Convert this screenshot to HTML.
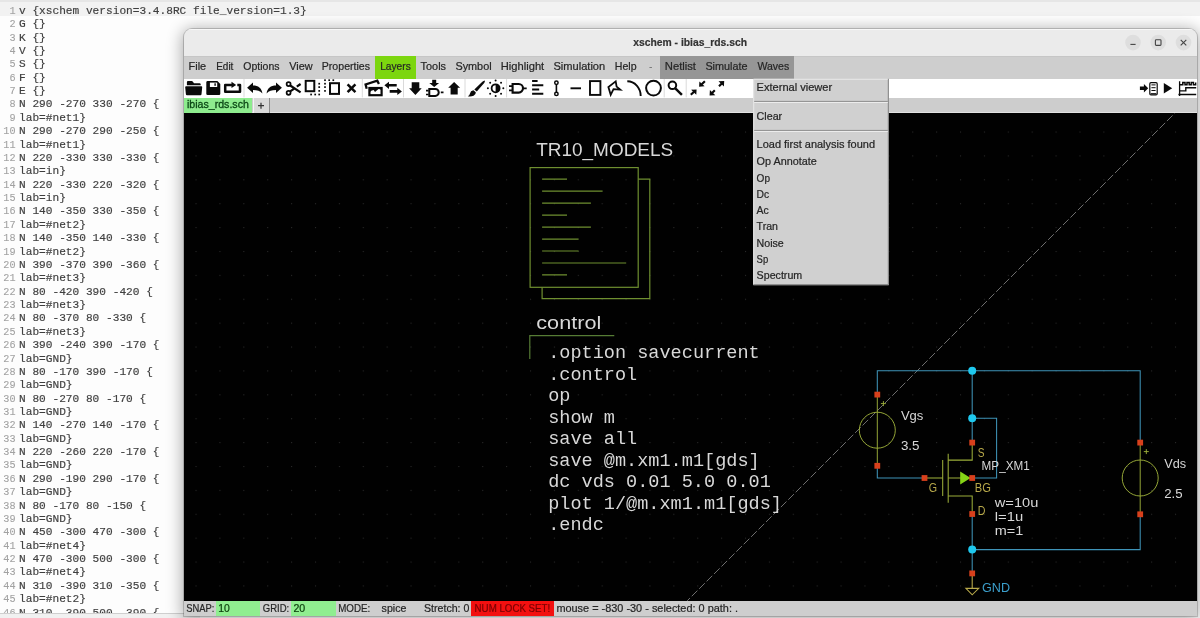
<!DOCTYPE html>
<html><head><meta charset="utf-8"><title>xschem - ibias_rds.sch</title>
<style>
html,body{margin:0;padding:0}
body{width:1200px;height:618px;overflow:hidden;position:relative;background:#fdfdfd;font-family:"Liberation Sans",sans-serif}
.ed{position:absolute;left:0;top:0;width:420px;height:612.5px;overflow:hidden;background:#fdfdfd;border-top:2px solid #e6e6e6;box-sizing:border-box}
.edbot{position:absolute;left:0;top:612.5px;width:200px;height:6px;background:#f1f1f1;border-top:1px solid #cfcfcf;box-sizing:border-box}
.edcur{position:absolute;left:0;top:0;width:1200px;height:13.6px;background:#f2f2f2}
.el{position:absolute;left:0;height:13.4px;line-height:13.4px;white-space:pre;font-family:"Liberation Mono",monospace;font-size:10.2px;color:#3f3f3f;-webkit-text-stroke:0.16px #3f3f3f}
.ln{position:absolute;right:-15.5px;top:0;color:#a2a2a2;-webkit-text-stroke:0.1px #a2a2a2;transform:scaleX(1.0);transform-origin:100% 50%}
.lt{position:absolute;left:19.4px;top:0;transform:scaleX(1.0946);transform-origin:0 50%}
.topstrip{position:absolute;left:0;top:0;width:1200px;height:15.6px;background:#f2f2f2;border-top:2px solid #e6e6e6;box-sizing:border-box}
.win{position:absolute;left:184px;top:29px;width:1013.4px;height:587px;background:#cdcdcd;border-radius:8px 8px 0 0;box-shadow:0 2px 16px 2px rgba(0,0,0,.33),0 0 0 1px rgba(0,0,0,.18);overflow:hidden}
.title{position:absolute;left:0;top:0;width:100%;height:26.6px;background:#ebebeb;border-top:1px solid #f8f8f8;box-sizing:border-box}
.menub{position:absolute;left:0;top:26.6px;width:100%;height:23.2px;background:#cecece;border-top:1px solid #c6c6c6;box-sizing:border-box}
.mlay{position:absolute;left:191.2px;top:26.6px;width:40.6px;height:23.2px;background:#7cd60f}
.mdark{position:absolute;left:476.2px;top:26.6px;width:133.8px;height:23.2px;background:#969696}
.tool{position:absolute;left:0;top:49.8px;width:100%;height:18.8px;background:#fff}
.tabs{position:absolute;left:0;top:68.6px;width:100%;height:15.8px;background:#cdcdcd;border-bottom:1px solid #e2e2e2;box-sizing:border-box}
.tab1{position:absolute;left:0;top:68.6px;width:68.4px;height:15.4px;background:#8eec8e}
.tab2{position:absolute;left:68.6px;top:68.8px;width:17.4px;height:15.2px;background:#d9d9d9;border-left:1px solid #f4f4f4;border-right:1px solid #8c8c8c;box-sizing:border-box}
.canvas{position:absolute;left:0;top:84.4px;width:100%;height:487.4px;background:#000}
.status{position:absolute;left:0;top:571.8px;width:100%;height:14.8px;background:#cecece}
.sg1{position:absolute;left:32.4px;top:572.4px;width:44px;height:14.2px;background:#90ee90}
.sg2{position:absolute;left:107.4px;top:572.4px;width:44.6px;height:14.2px;background:#90ee90}
.sred{position:absolute;left:287.2px;top:572.2px;width:83.2px;height:14.4px;background:#f31010}
.drop{position:absolute;left:569.2px;top:50.6px;width:135.4px;height:206.6px;background:#cfcfcf;border-right:1px solid #8a8a8a;border-bottom:1px solid #8a8a8a;border-left:1px solid #e6e6e6;box-sizing:border-box}
.sep{position:absolute;left:1px;width:133px;height:0;border-top:1px solid #9a9a9a;border-bottom:1px solid #ececec}
.root{position:absolute;left:0;top:0;width:1200px;height:618px;overflow:hidden;will-change:transform;opacity:.9999}
svg.ov{position:absolute;left:0;top:0;width:1200px;height:618px;pointer-events:none}
svg text{font-family:"Liberation Sans",sans-serif;white-space:pre}
</style></head>
<body>
<div class="root">
<div class="topstrip"></div>
<div class="ed">
<div class="edcur"></div>
<div class="el" style="top:2.90px"><span class="ln">1</span><span class="lt">v {xschem version=3.4.8RC file_version=1.3}</span></div>
<div class="el" style="top:16.27px"><span class="ln">2</span><span class="lt">G {}</span></div>
<div class="el" style="top:29.64px"><span class="ln">3</span><span class="lt">K {}</span></div>
<div class="el" style="top:43.01px"><span class="ln">4</span><span class="lt">V {}</span></div>
<div class="el" style="top:56.38px"><span class="ln">5</span><span class="lt">S {}</span></div>
<div class="el" style="top:69.75px"><span class="ln">6</span><span class="lt">F {}</span></div>
<div class="el" style="top:83.12px"><span class="ln">7</span><span class="lt">E {}</span></div>
<div class="el" style="top:96.49px"><span class="ln">8</span><span class="lt">N 290 -270 330 -270 {</span></div>
<div class="el" style="top:109.86px"><span class="ln">9</span><span class="lt">lab=#net1}</span></div>
<div class="el" style="top:123.23px"><span class="ln">10</span><span class="lt">N 290 -270 290 -250 {</span></div>
<div class="el" style="top:136.60px"><span class="ln">11</span><span class="lt">lab=#net1}</span></div>
<div class="el" style="top:149.97px"><span class="ln">12</span><span class="lt">N 220 -330 330 -330 {</span></div>
<div class="el" style="top:163.34px"><span class="ln">13</span><span class="lt">lab=in}</span></div>
<div class="el" style="top:176.71px"><span class="ln">14</span><span class="lt">N 220 -330 220 -320 {</span></div>
<div class="el" style="top:190.08px"><span class="ln">15</span><span class="lt">lab=in}</span></div>
<div class="el" style="top:203.45px"><span class="ln">16</span><span class="lt">N 140 -350 330 -350 {</span></div>
<div class="el" style="top:216.82px"><span class="ln">17</span><span class="lt">lab=#net2}</span></div>
<div class="el" style="top:230.19px"><span class="ln">18</span><span class="lt">N 140 -350 140 -330 {</span></div>
<div class="el" style="top:243.56px"><span class="ln">19</span><span class="lt">lab=#net2}</span></div>
<div class="el" style="top:256.93px"><span class="ln">20</span><span class="lt">N 390 -370 390 -360 {</span></div>
<div class="el" style="top:270.30px"><span class="ln">21</span><span class="lt">lab=#net3}</span></div>
<div class="el" style="top:283.67px"><span class="ln">22</span><span class="lt">N 80 -420 390 -420 {</span></div>
<div class="el" style="top:297.04px"><span class="ln">23</span><span class="lt">lab=#net3}</span></div>
<div class="el" style="top:310.41px"><span class="ln">24</span><span class="lt">N 80 -370 80 -330 {</span></div>
<div class="el" style="top:323.78px"><span class="ln">25</span><span class="lt">lab=#net3}</span></div>
<div class="el" style="top:337.15px"><span class="ln">26</span><span class="lt">N 390 -240 390 -170 {</span></div>
<div class="el" style="top:350.52px"><span class="ln">27</span><span class="lt">lab=GND}</span></div>
<div class="el" style="top:363.89px"><span class="ln">28</span><span class="lt">N 80 -170 390 -170 {</span></div>
<div class="el" style="top:377.26px"><span class="ln">29</span><span class="lt">lab=GND}</span></div>
<div class="el" style="top:390.63px"><span class="ln">30</span><span class="lt">N 80 -270 80 -170 {</span></div>
<div class="el" style="top:404.00px"><span class="ln">31</span><span class="lt">lab=GND}</span></div>
<div class="el" style="top:417.37px"><span class="ln">32</span><span class="lt">N 140 -270 140 -170 {</span></div>
<div class="el" style="top:430.74px"><span class="ln">33</span><span class="lt">lab=GND}</span></div>
<div class="el" style="top:444.11px"><span class="ln">34</span><span class="lt">N 220 -260 220 -170 {</span></div>
<div class="el" style="top:457.48px"><span class="ln">35</span><span class="lt">lab=GND}</span></div>
<div class="el" style="top:470.85px"><span class="ln">36</span><span class="lt">N 290 -190 290 -170 {</span></div>
<div class="el" style="top:484.22px"><span class="ln">37</span><span class="lt">lab=GND}</span></div>
<div class="el" style="top:497.59px"><span class="ln">38</span><span class="lt">N 80 -170 80 -150 {</span></div>
<div class="el" style="top:510.96px"><span class="ln">39</span><span class="lt">lab=GND}</span></div>
<div class="el" style="top:524.33px"><span class="ln">40</span><span class="lt">N 450 -300 470 -300 {</span></div>
<div class="el" style="top:537.70px"><span class="ln">41</span><span class="lt">lab=#net4}</span></div>
<div class="el" style="top:551.07px"><span class="ln">42</span><span class="lt">N 470 -300 500 -300 {</span></div>
<div class="el" style="top:564.44px"><span class="ln">43</span><span class="lt">lab=#net4}</span></div>
<div class="el" style="top:577.81px"><span class="ln">44</span><span class="lt">N 310 -390 310 -350 {</span></div>
<div class="el" style="top:591.18px"><span class="ln">45</span><span class="lt">lab=#net2}</span></div>
<div class="el" style="top:604.55px"><span class="ln">46</span><span class="lt">N 310 -390 500 -390 {</span></div>
</div>
<div class="edbot"></div>
<div class="win">
 <div class="title"></div>
 <div class="menub"></div><div class="mlay"></div><div class="mdark"></div>
 <div class="tool"></div>
 <div class="tabs"></div><div class="tab1"></div><div class="tab2"></div>
 <div class="canvas"></div>
 <div class="status"></div><div class="sg1"></div><div class="sg2"></div><div class="sred"></div>
 
</div>
<svg class="ov" viewBox="0 0 1200 618">
<defs>
<pattern id="grid" x="195.5" y="131.5" width="23.89" height="23.89" patternUnits="userSpaceOnUse"><rect x="0" y="0" width="1.1" height="1.1" fill="#2a2a2a"/></pattern>
<clipPath id="cv"><rect x="184" y="113.4" width="1013.4" height="487.4"/></clipPath>
</defs>
<g clip-path="url(#cv)">
<rect x="184" y="113" width="1013.4" height="487.8" fill="url(#grid)"/>
<path d="M1180 108L683 605" stroke="#8c8c8c" stroke-width="0.8" stroke-dasharray="8 2.5" fill="none"/>
<text x="536.2" y="156.2" font-size="18.85" fill="#d8d8d8" textLength="137.0" lengthAdjust="spacingAndGlyphs">TR10_MODELS</text>
<g fill="none" stroke="#6f8f30" stroke-width="1.2">
<rect x="530.1" y="167.6" width="108.1" height="119.7"/>
<path d="M638.2 179.2H649.8V298.6H542.1V287.3"/>
<path d="M542.1 179.20H567"/>
<path d="M542.1 191.17H602.6"/>
<path d="M542.1 203.14H590.9"/>
<path d="M542.1 215.11H567"/>
<path d="M542.1 227.08H590.9"/>
<path d="M542.1 239.05H578.6"/>
<path d="M542.1 251.02H578.6"/>
<path d="M542.1 262.99H626.2"/>
<path d="M542.1 274.96H567"/>
</g>
<text x="536.3" y="328.7" font-size="18.85" fill="#d8d8d8" textLength="65.0" lengthAdjust="spacingAndGlyphs">control</text>
<path d="M614.3 335.6H529.8V358.9" fill="none" stroke="#567c35" stroke-width="1.2"/>
<text x="548.2" y="358.0" font-size="18.5" fill="#d8d8d8" style="font-family:&quot;Liberation Mono&quot;,monospace" textLength="211.47" lengthAdjust="spacingAndGlyphs">.option savecurrent</text>
<text x="548.2" y="379.55" font-size="18.5" fill="#d8d8d8" style="font-family:&quot;Liberation Mono&quot;,monospace" textLength="89.04" lengthAdjust="spacingAndGlyphs">.control</text>
<text x="548.2" y="401.1" font-size="18.5" fill="#d8d8d8" style="font-family:&quot;Liberation Mono&quot;,monospace" textLength="22.26" lengthAdjust="spacingAndGlyphs">op</text>
<text x="548.2" y="422.65" font-size="18.5" fill="#d8d8d8" style="font-family:&quot;Liberation Mono&quot;,monospace" textLength="66.78" lengthAdjust="spacingAndGlyphs">show m</text>
<text x="548.2" y="444.2" font-size="18.5" fill="#d8d8d8" style="font-family:&quot;Liberation Mono&quot;,monospace" textLength="89.04" lengthAdjust="spacingAndGlyphs">save all</text>
<text x="548.2" y="465.75" font-size="18.5" fill="#d8d8d8" style="font-family:&quot;Liberation Mono&quot;,monospace" textLength="211.47" lengthAdjust="spacingAndGlyphs">save @m.xm1.m1[gds]</text>
<text x="548.2" y="487.3" font-size="18.5" fill="#d8d8d8" style="font-family:&quot;Liberation Mono&quot;,monospace" textLength="222.6" lengthAdjust="spacingAndGlyphs">dc vds 0.01 5.0 0.01</text>
<text x="548.2" y="508.85" font-size="18.5" fill="#d8d8d8" style="font-family:&quot;Liberation Mono&quot;,monospace" textLength="233.73" lengthAdjust="spacingAndGlyphs">plot 1/@m.xm1.m1[gds]</text>
<text x="548.2" y="530.4" font-size="18.5" fill="#d8d8d8" style="font-family:&quot;Liberation Mono&quot;,monospace" textLength="55.65" lengthAdjust="spacingAndGlyphs">.endc</text>
<g fill="none" stroke="#3f94b8" stroke-width="1.05">
<path d="M877.3 394.6V370.7H1140.2V442.6"/>
<path d="M877.3 465.8V478.0H924.5"/>
<path d="M972.2 370.7V442.6"/>
<path d="M972.2 418.2H996.6V478.0H972.2"/>
<path d="M972.2 514V573.4"/>
<path d="M972.2 549.6H1140.2V514.3"/>
</g>
<g fill="none" stroke="#9cae3a" stroke-width="0.95"><circle cx="877.3" cy="430.2" r="18"/><path d="M877.3 394.6V465.8"/><path d="M880.9 403.6h5M883.4 401.1v5"/></g>
<g fill="none" stroke="#9cae3a" stroke-width="0.95"><circle cx="1140.2" cy="478.0" r="18"/><path d="M1140.2 442.6V514.3"/><path d="M1143.8 451.6h5M1146.3 449.1v5"/></g>
<g fill="none" stroke="#9cae3a" stroke-width="1.05">
<path d="M972.2 442.6V460.1H948.2"/>
<path d="M948.2 453.7V502.8"/>
<path d="M942.7 460.1V496"/>
<path d="M924.5 478.0H942.7"/>
<path d="M948.2 478.0H972.2"/>
<path d="M948.2 496H972.2V514"/>
</g>
<path d="M960.2 471.6L970.6 478L960.2 484.6Z" fill="#86d416"/>
<path d="M972.2 573.4V588.4M965.9 588.4H978.7L972.2 594.8Z" fill="none" stroke="#b8a94a" stroke-width="1.1"/>
<circle cx="972.2" cy="370.7" r="4" fill="#1ec8ee"/>
<circle cx="972.2" cy="418.2" r="4" fill="#1ec8ee"/>
<circle cx="972.2" cy="549.6" r="4" fill="#1ec8ee"/>
<rect x="874.4" y="391.7" width="5.8" height="5.8" fill="#d8401c"/>
<rect x="874.4" y="462.9" width="5.8" height="5.8" fill="#d8401c"/>
<rect x="1137.3" y="439.7" width="5.8" height="5.8" fill="#d8401c"/>
<rect x="1137.3" y="511.4" width="5.8" height="5.8" fill="#d8401c"/>
<rect x="969.3" y="439.7" width="5.8" height="5.8" fill="#d8401c"/>
<rect x="921.6" y="475.1" width="5.8" height="5.8" fill="#d8401c"/>
<rect x="969.3" y="475.1" width="5.8" height="5.8" fill="#d8401c"/>
<rect x="969.3" y="511.1" width="5.8" height="5.8" fill="#d8401c"/>
<rect x="969.3" y="570.5" width="5.8" height="5.8" fill="#d8401c"/>
<text x="900.9" y="419.8" font-size="12.0" fill="#d8d8d8" textLength="22.5" lengthAdjust="spacingAndGlyphs">Vgs</text>
<text x="900.9" y="449.7" font-size="12.0" fill="#d8d8d8" textLength="18.6" lengthAdjust="spacingAndGlyphs">3.5</text>
<text x="977.8" y="456.5" font-size="12.0" fill="#b8a94a" textLength="6.8" lengthAdjust="spacingAndGlyphs">S</text>
<text x="981.6" y="469.8" font-size="12.0" fill="#d8d8d8" textLength="48.1" lengthAdjust="spacingAndGlyphs">MP_XM1</text>
<text x="928.7" y="492.1" font-size="12.0" fill="#b8a94a" textLength="8.3" lengthAdjust="spacingAndGlyphs">G</text>
<text x="974.8" y="492.1" font-size="12.0" fill="#b8a94a" textLength="16.1" lengthAdjust="spacingAndGlyphs">BG</text>
<text x="977.7" y="515.0" font-size="12.0" fill="#b8a94a" textLength="7.7" lengthAdjust="spacingAndGlyphs">D</text>
<text x="994.8" y="506.7" font-size="12.0" fill="#d8d8d8" textLength="43.5" lengthAdjust="spacingAndGlyphs">w=10u</text>
<text x="994.8" y="520.9" font-size="12.0" fill="#d8d8d8" textLength="28.5" lengthAdjust="spacingAndGlyphs">l=1u</text>
<text x="994.8" y="534.9" font-size="12.0" fill="#d8d8d8" textLength="28.5" lengthAdjust="spacingAndGlyphs">m=1</text>
<text x="1164.2" y="467.7" font-size="12.0" fill="#d8d8d8" textLength="21.9" lengthAdjust="spacingAndGlyphs">Vds</text>
<text x="1164.2" y="497.8" font-size="12.0" fill="#d8d8d8" textLength="18.4" lengthAdjust="spacingAndGlyphs">2.5</text>
<text x="982.0" y="591.5" font-size="12.0" fill="#3b9fcc" textLength="28.0" lengthAdjust="spacingAndGlyphs">GND</text>
</g>
<!-- dropdown -->
<rect x="753.2" y="78.8" width="135.6" height="206.4" fill="#d0d0d0"/>
<path d="M888.3 78.8V284.7H753.7" fill="none" stroke="#808080" stroke-width="1"/>
<path d="M753.7 284.2V79.3H887.8" fill="none" stroke="#e8e8e8" stroke-width="1"/>
<path d="M754.2 101.4H887.8M754.2 130.4H887.8" stroke="#8e8e8e" stroke-width="1"/>
<path d="M754.2 102.5H887.8M754.2 131.5H887.8" stroke="#ececec" stroke-width="1"/>
<!-- title -->
<text x="633.2" y="46.4" font-size="11" fill="#333333" font-weight="bold" textLength="113.8" lengthAdjust="spacingAndGlyphs" stroke="#333333" stroke-width="0.2">xschem - ibias_rds.sch</text>
<g fill="#dedede"><circle cx="1133" cy="42.6" r="7.8"/><circle cx="1158.2" cy="42.6" r="7.8"/><circle cx="1183.5" cy="42.6" r="7.8"/></g>
<g stroke="#444" stroke-width="1.1" fill="none"><path d="M1130.4 44.4h5.2"/><rect x="1155.4" y="39.8" width="5.6" height="5.6" rx="0.8"/><path d="M1180.7 39.8l5.6 5.6M1186.3 39.8l-5.6 5.6"/></g>
<text x="188.6" y="70.35" font-size="10.8" fill="#262626" textLength="17.6" lengthAdjust="spacingAndGlyphs" stroke="#262626" stroke-width="0.22">File</text>
<text x="216.2" y="70.35" font-size="10.8" fill="#262626" textLength="17.2" lengthAdjust="spacingAndGlyphs" stroke="#262626" stroke-width="0.22">Edit</text>
<text x="243.3" y="70.35" font-size="10.8" fill="#262626" textLength="36.2" lengthAdjust="spacingAndGlyphs" stroke="#262626" stroke-width="0.22">Options</text>
<text x="289.2" y="70.35" font-size="10.8" fill="#262626" textLength="23.4" lengthAdjust="spacingAndGlyphs" stroke="#262626" stroke-width="0.22">View</text>
<text x="321.8" y="70.35" font-size="10.8" fill="#262626" textLength="48.2" lengthAdjust="spacingAndGlyphs" stroke="#262626" stroke-width="0.22">Properties</text>
<text x="380.2" y="70.35" font-size="10.8" fill="#262626" textLength="30.6" lengthAdjust="spacingAndGlyphs" stroke="#262626" stroke-width="0.22">Layers</text>
<text x="420.6" y="70.35" font-size="10.8" fill="#262626" textLength="25.4" lengthAdjust="spacingAndGlyphs" stroke="#262626" stroke-width="0.22">Tools</text>
<text x="455.4" y="70.35" font-size="10.8" fill="#262626" textLength="36.2" lengthAdjust="spacingAndGlyphs" stroke="#262626" stroke-width="0.22">Symbol</text>
<text x="500.8" y="70.35" font-size="10.8" fill="#262626" textLength="43.4" lengthAdjust="spacingAndGlyphs" stroke="#262626" stroke-width="0.22">Highlight</text>
<text x="553.4" y="70.35" font-size="10.8" fill="#262626" textLength="51.8" lengthAdjust="spacingAndGlyphs" stroke="#262626" stroke-width="0.22">Simulation</text>
<text x="614.8" y="70.35" font-size="10.8" fill="#262626" textLength="21.8" lengthAdjust="spacingAndGlyphs" stroke="#262626" stroke-width="0.22">Help</text>
<text x="664.8" y="70.35" font-size="10.8" fill="#262626" textLength="31.2" lengthAdjust="spacingAndGlyphs" stroke="#262626" stroke-width="0.22">Netlist</text>
<text x="705.4" y="70.35" font-size="10.8" fill="#262626" textLength="42.2" lengthAdjust="spacingAndGlyphs" stroke="#262626" stroke-width="0.22">Simulate</text>
<text x="757.4" y="70.35" font-size="10.8" fill="#262626" textLength="31.8" lengthAdjust="spacingAndGlyphs" stroke="#262626" stroke-width="0.22">Waves</text>
<text x="649.2" y="70.35" font-size="10.8" fill="#777" textLength="3" lengthAdjust="spacingAndGlyphs" stroke="#777" stroke-width="0.22">-</text>
<path d="M244 79V97.4" stroke="#dadada" stroke-width="1"/>
<path d="M362.3 79V97.4" stroke="#dadada" stroke-width="1"/>
<path d="M403.5 79V97.4" stroke="#dadada" stroke-width="1"/>
<path d="M465 79V97.4" stroke="#dadada" stroke-width="1"/>
<path d="M506.6 79V97.4" stroke="#dadada" stroke-width="1"/>
<path d="M664.2 79V97.4" stroke="#dadada" stroke-width="1"/>
<path d="M686.2 79V97.4" stroke="#dadada" stroke-width="1"/>
<path fill="#0a0a0a" d="M186.9 82.2q0-1.1 1.1-1.1h3.7q.6 0 1 .5l1.3 1.6h5.6q1.1 0 1.1 1.1v1H186.9z"/>
<path fill="#0a0a0a" d="M186.1 86.3h15.2q1 0 .9 1l-.7 6.9q-.1 1-1.1 1h-13.4q-1 0-1.1-1l-.7-6.9q-.1-1 .9-1z"/>
<path fill="#0a0a0a" d="M207.6 81.1h9.8l2.9 2.8v9.8q0 1.3-1.3 1.3h-11.4q-1.3 0-1.3-1.3v-11.3q0-1.3 1.3-1.3z"/>
<rect x="209.9" y="82.6" width="7.3" height="4.4" fill="#fff"/>
<rect x="214.4" y="83.3" width="1.4" height="2.5" fill="#0a0a0a"/>
<path fill="none" stroke="#0a0a0a" stroke-width="2.5" d="M232 85.1h-6.8v6.7h14.8v-6.7h-2.7" stroke-linejoin="round"/>
<path fill="#0a0a0a" d="M231.5 81.8l4.7 3.1l-4.7 3.1z"/>
<path fill="#0a0a0a" d="M247.1 87.7l5.9-5.2v3c5.2 0 8.7 2.6 9.4 7.9c-2.4-2.6-5-3.4-9.4-3.4v3z"/>
<path fill="#0a0a0a" d="M281.9 87.7l-5.9-5.2v3c-5.2 0-8.7 2.6-9.4 7.9c2.4-2.6 5-3.4 9.4-3.4v3z"/>
<g fill="none" stroke="#0a0a0a"><circle cx="288.6" cy="84.1" r="2" stroke-width="1.7"/><circle cx="288.6" cy="92.8" r="2" stroke-width="1.7"/><path stroke-width="2.2" d="M290.2 85.5L300.6 92.4M290.2 91.4L295 88.2M296.8 86.7L300.6 84"/></g>
<rect x="305.7" y="80.8" width="8.6" height="10.4" fill="none" stroke="#0a0a0a" stroke-width="2"/>
<rect x="318.35" y="82.85" width="1.7" height="1.7" fill="#0a0a0a"/>
<rect x="318.35" y="86.25" width="1.7" height="1.7" fill="#0a0a0a"/>
<rect x="318.35" y="90.05" width="1.7" height="1.7" fill="#0a0a0a"/>
<rect x="318.35" y="93.65" width="1.7" height="1.7" fill="#0a0a0a"/>
<rect x="314.35" y="93.65" width="1.7" height="1.7" fill="#0a0a0a"/>
<rect x="310.25" y="93.65" width="1.7" height="1.7" fill="#0a0a0a"/>
<rect x="324.15" y="79.35" width="1.7" height="1.7" fill="#0a0a0a"/>
<rect x="328.35" y="79.35" width="1.7" height="1.7" fill="#0a0a0a"/>
<rect x="332.45" y="79.35" width="1.7" height="1.7" fill="#0a0a0a"/>
<rect x="324.15" y="82.85" width="1.7" height="1.7" fill="#0a0a0a"/>
<rect x="324.15" y="86.25" width="1.7" height="1.7" fill="#0a0a0a"/>
<rect x="324.15" y="90.05" width="1.7" height="1.7" fill="#0a0a0a"/>
<rect x="330" y="83.2" width="9" height="10.7" fill="#fff" stroke="#0a0a0a" stroke-width="2"/>
<path fill="none" stroke="#0a0a0a" stroke-width="2.5" d="M347.6 84.3l7.8 7.8M355.4 84.3l-7.8 7.8"/>
<rect x="369.4" y="88" width="12.2" height="7.2" fill="#fff" stroke="#0a0a0a" stroke-width="2.2"/>
<path fill="#0a0a0a" d="M370 88.5h11v1.3l-2.2-1l-3.8 3.1l-1.4-2l-2.3.9l-1.3 1.2z"/>
<path fill="none" stroke="#0a0a0a" stroke-width="2.3" d="M366.7 88.7l-1.1-4.3l11.7-3.7l1.6 3.3"/>
<path fill="none" stroke="#0a0a0a" stroke-width="2.6" d="M387.4 85.3h9.3M389.7 91.4h9.3"/>
<path fill="#0a0a0a" d="M384.4 85.3l4.6-3.6v7.2zM401.9 91.4l-4.6-3.6v7.2z"/>
<path fill="#0a0a0a" d="M411.7 82.2h7.6v6.1h2.4l-6.3 6.6l-6.3-6.6h2.6z"/>
<path fill="#0a0a0a" d="M432.2 79.7h4v3.3h2.9l-4.9 3.9l-4.9-3.9h2.9z"/>
<path fill="#fff" stroke="#0a0a0a" stroke-width="2" d="M429.3 89h6a3.45 3.45 0 0 1 0 6.9h-6z"/>
<path fill="none" stroke="#0a0a0a" stroke-width="1.7" d="M426 90.7h2.6M426 94.5h2.6M440.8 92.3h2.7"/>
<path fill="#0a0a0a" d="M454.1 81.9l6 5.9h-2.4v6.7h-7.1v-6.7h-2.4z"/>
<path fill="#0a0a0a" d="M484.8 80.4q.4 1.2-.6 2.6l-7.4 8.6l-2.5-2.1l8-7.8q1.2-1.2 2.5-1.3z"/>
<path fill="#0a0a0a" d="M473.4 90.2l2.4 2q.2 2.4-2.2 3.6q-2.6 1-5.8.5q1.8-.9 2.2-2.8q.4-2.7 3.4-3.3z"/>
<circle cx="495.6" cy="88.3" r="4" fill="#fff" stroke="#0a0a0a" stroke-width="1.8"/>
<path fill="#0a0a0a" d="M495.6 84.3a4 4 0 0 1 0 8z"/>
<circle cx="503.30" cy="88.30" r="1" fill="#0a0a0a"/>
<circle cx="501.04" cy="93.74" r="1" fill="#0a0a0a"/>
<circle cx="495.60" cy="96.00" r="1" fill="#0a0a0a"/>
<circle cx="490.16" cy="93.74" r="1" fill="#0a0a0a"/>
<circle cx="487.90" cy="88.30" r="1" fill="#0a0a0a"/>
<circle cx="490.16" cy="82.86" r="1" fill="#0a0a0a"/>
<circle cx="495.60" cy="80.60" r="1" fill="#0a0a0a"/>
<circle cx="501.04" cy="82.86" r="1" fill="#0a0a0a"/>
<path fill="none" stroke="#0a0a0a" stroke-width="2.1" d="M512.6 84h6.1a4.3 4.3 0 0 1 0 8.6h-6.1z"/>
<path fill="none" stroke="#0a0a0a" stroke-width="1.8" d="M509 86.2h3.4M509 90.4h3.4M523 88.3h3.7"/>
<path fill="none" stroke="#0a0a0a" stroke-width="2.1" d="M532.1 81h5.5M532.1 85.3h11.2M532.1 89.5h7.1M532.1 93.7h11.2"/>
<path fill="none" stroke="#0a0a0a" stroke-width="1.6" d="M556.4 84.4v7.8"/>
<circle cx="556.4" cy="82.8" r="1.7" fill="#fff" stroke="#0a0a0a" stroke-width="1.5"/><circle cx="556.4" cy="93.9" r="1.7" fill="#fff" stroke="#0a0a0a" stroke-width="1.5"/>
<path fill="none" stroke="#0a0a0a" stroke-width="1.9" d="M570.5 88.3h10.5"/>
<rect x="590" y="81.1" width="10.4" height="13.8" fill="none" stroke="#0a0a0a" stroke-width="1.9"/>
<path fill="none" stroke="#0a0a0a" stroke-width="1.8" d="M615.7 81.4L608.4 87.1L610.7 94.8L613.5 89.2L620.3 89.6L616.6 86.6Z" stroke-linejoin="miter"/>
<path fill="none" stroke="#0a0a0a" stroke-width="1.9" d="M627.3 81.3A13.4 14.7 0 0 1 640.7 96"/>
<circle cx="653.5" cy="88.1" r="7.4" fill="none" stroke="#0a0a0a" stroke-width="2"/>
<circle cx="672.4" cy="85.3" r="3.8" fill="none" stroke="#0a0a0a" stroke-width="2"/>
<path fill="none" stroke="#0a0a0a" stroke-width="2.4" d="M675.3 88.3l6.6 6.6"/>
<path fill="none" stroke="#0a0a0a" stroke-width="2.2" d="M690.8 94.8l3.2-3M704.9 81.3l-3.2 3"/>
<path fill="#0a0a0a" d="M696.6 89.4l-.3 5.3l-5.2-4.9zM699.1 86.7l.3-5.3l5.2 4.9z"/>
<path fill="none" stroke="#0a0a0a" stroke-width="2.2" d="M714.8 90.3l-3 2.9M719 86.2l3-2.9"/>
<path fill="#0a0a0a" d="M709.6 95.6l.3-5.5l5.4 5.1zM724.2 80.9l-.3 5.5l-5.4-5.1z"/>
<path fill="#0a0a0a" d="M1139.9 86.6h4v-2.5l4.3 4.2l-4.3 4.2v-2.5h-4z"/>
<rect x="1149.8" y="82.7" width="7.4" height="12.3" rx="1.2" fill="#fff" stroke="#0a0a0a" stroke-width="1.2"/>
<path fill="none" stroke="#0a0a0a" stroke-width="1" d="M1151.4 84.9h4.2M1151.4 87.7h4.2M1151.4 90.5h4.2"/>
<path fill="none" stroke="#0a0a0a" stroke-width="1.5" d="M1150.6 93.9h5.8"/>
<path fill="#0a0a0a" d="M1163.8 83l8.4 5.2l-8.4 5.2z"/>
<path fill="none" stroke="#0a0a0a" stroke-width="1.3" d="M1179.6 81.3v14.6M1178.4 94.5h17.8"/>
<path fill="none" stroke="#0a0a0a" stroke-width="1.5" d="M1179.6 84.8h3.2v-2.4h2.2v2.4h2v-2.4h2.2v2.4h2v-2.4h2.2v2.4h2.2v-2.4"/>
<path fill="none" stroke="#0a0a0a" stroke-width="1.4" d="M1179.6 90.9h6.2v-3.2h10.4"/>
<!-- tabs -->
<text x="186.9" y="107.8" font-size="10.8" fill="#0b4715" textLength="62" lengthAdjust="spacingAndGlyphs" stroke="#0b4715" stroke-width="0.3">ibias_rds.sch</text>
<path d="M258 105.7h6M261 102.7v6" stroke="#333" stroke-width="1.2"/>
<text x="756.6" y="90.6" font-size="10.8" fill="#262626" textLength="75.6" lengthAdjust="spacingAndGlyphs" stroke="#262626" stroke-width="0.22">External viewer</text>
<text x="756.6" y="119.7" font-size="10.8" fill="#262626" textLength="25.6" lengthAdjust="spacingAndGlyphs" stroke="#262626" stroke-width="0.22">Clear</text>
<text x="756.6" y="148.3" font-size="10.8" fill="#262626" textLength="118.4" lengthAdjust="spacingAndGlyphs" stroke="#262626" stroke-width="0.22">Load first analysis found</text>
<text x="756.6" y="165.0" font-size="10.8" fill="#262626" textLength="60.2" lengthAdjust="spacingAndGlyphs" stroke="#262626" stroke-width="0.22">Op Annotate</text>
<text x="756.6" y="181.8" font-size="10.8" fill="#262626" textLength="13.4" lengthAdjust="spacingAndGlyphs" stroke="#262626" stroke-width="0.22">Op</text>
<text x="756.6" y="197.8" font-size="10.8" fill="#262626" textLength="12.6" lengthAdjust="spacingAndGlyphs" stroke="#262626" stroke-width="0.22">Dc</text>
<text x="756.6" y="214.2" font-size="10.8" fill="#262626" textLength="12.2" lengthAdjust="spacingAndGlyphs" stroke="#262626" stroke-width="0.22">Ac</text>
<text x="756.6" y="230.2" font-size="10.8" fill="#262626" textLength="21.4" lengthAdjust="spacingAndGlyphs" stroke="#262626" stroke-width="0.22">Tran</text>
<text x="756.6" y="246.5" font-size="10.8" fill="#262626" textLength="27.2" lengthAdjust="spacingAndGlyphs" stroke="#262626" stroke-width="0.22">Noise</text>
<text x="756.6" y="262.9" font-size="10.8" fill="#262626" textLength="11.6" lengthAdjust="spacingAndGlyphs" stroke="#262626" stroke-width="0.22">Sp</text>
<text x="756.6" y="279.3" font-size="10.8" fill="#262626" textLength="45.6" lengthAdjust="spacingAndGlyphs" stroke="#262626" stroke-width="0.22">Spectrum</text>
<text x="186.2" y="612.2" font-size="10.8" fill="#262626" textLength="28.2" lengthAdjust="spacingAndGlyphs" stroke="#262626" stroke-width="0.22">SNAP:</text>
<text x="218.2" y="612.2" font-size="10.8" fill="#0a3d0a" textLength="11.6" lengthAdjust="spacingAndGlyphs" stroke="#0a3d0a" stroke-width="0.22">10</text>
<text x="262.8" y="612.2" font-size="10.8" fill="#262626" textLength="26.4" lengthAdjust="spacingAndGlyphs" stroke="#262626" stroke-width="0.22">GRID:</text>
<text x="293.4" y="612.2" font-size="10.8" fill="#0a3d0a" textLength="11.8" lengthAdjust="spacingAndGlyphs" stroke="#0a3d0a" stroke-width="0.22">20</text>
<text x="338.2" y="612.2" font-size="10.8" fill="#262626" textLength="32.0" lengthAdjust="spacingAndGlyphs" stroke="#262626" stroke-width="0.22">MODE:</text>
<text x="381.6" y="612.2" font-size="10.8" fill="#262626" textLength="24.8" lengthAdjust="spacingAndGlyphs" stroke="#262626" stroke-width="0.22">spice</text>
<text x="424.0" y="612.2" font-size="10.8" fill="#262626" textLength="45.4" lengthAdjust="spacingAndGlyphs" stroke="#262626" stroke-width="0.22">Stretch: 0</text>
<text x="474.6" y="612.2" font-size="10.8" fill="#7a0000" textLength="75.6" lengthAdjust="spacingAndGlyphs" stroke="#7a0000" stroke-width="0.22">NUM LOCK SET!</text>
<text x="556.4" y="612.2" font-size="10.8" fill="#262626" textLength="181.6" lengthAdjust="spacingAndGlyphs" stroke="#262626" stroke-width="0.22">mouse = -830 -30 - selected: 0 path: .</text>
</svg>
</div>
</body></html>
